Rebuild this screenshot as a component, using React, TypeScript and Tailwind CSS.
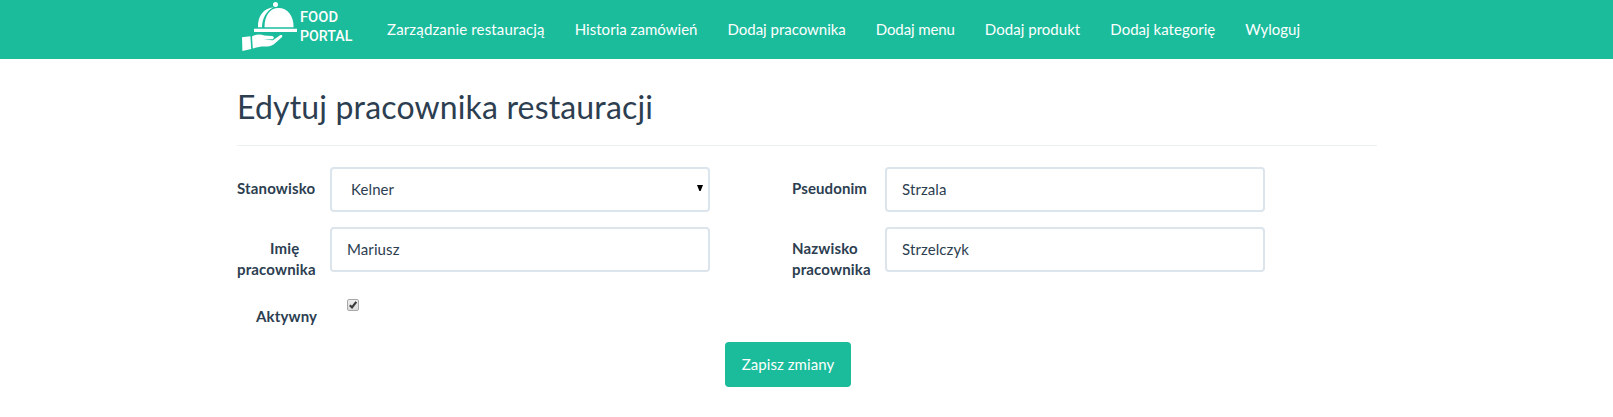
import React from "react";

const links = [
  { label: "Zarządzanie restauracją", tracking: "tracking-[0.15px]" },
  { label: "Historia zamówień", tracking: "tracking-[0.03px]" },
  { label: "Dodaj pracownika", tracking: "tracking-[-0.02px]" },
  { label: "Dodaj menu", tracking: "tracking-[-0.1px]" },
  { label: "Dodaj produkt", tracking: "tracking-[0.04px]" },
  { label: "Dodaj kategorię", tracking: "tracking-[0.03px]" },
  { label: "Wyloguj", tracking: "tracking-normal" },
];

const fieldClass =
  "h-[45px] w-[380px] shrink-0 rounded-[4px] border-2 border-[#dce4ec] bg-white px-[15px] pt-[9px] pb-[11px] leading-[21px] tracking-[0.1px] text-[#2c3e50] outline-none";

function Logo() {
  return (
    <svg width="140" height="59" viewBox="0 0 140 59" className="block shrink-0" fill="#fff">
      <circle cx="45.5" cy="4.6" r="2.5" />
      <path d="M34.5 27.2C34.5 15.5 40 8 48.5 8C57.5 8 63.6 15.5 63.6 27.2Z" />
      <path d="M28 27.2C27.6 16 33.5 8.2 43.5 7.2C36.5 11 32.3 17.5 32 27.2Z" />
      <path d="M24 28.8H67V32H24Z" />
      <path d="M12 37.3L20.4 36.3L21.2 49L12.4 51Z" />
      <path d="M22 36.4C26 34 30.5 33.8 34.5 35.6L42 36C44.5 36.4 44.3 39 42 39.2L33.5 39.8L43 40.2L50 35.3C52 34.2 53.2 36 51.6 37.4L43.6 44.4C40.5 46.4 36 46.7 31.5 46.4L22.8 48.4Z" />
      <g fontFamily="Roboto, sans-serif" fontWeight="500" fontSize="14.6">
        <text x="70" y="21.9" textLength="38" lengthAdjust="spacingAndGlyphs">FOOD</text>
        <text x="70" y="40.9" textLength="52.3" lengthAdjust="spacingAndGlyphs">PORTAL</text>
      </g>
    </svg>
  );
}

export default function App() {
  return (
    <div className="min-h-[417px] bg-white font-['Lato',sans-serif] text-[15px] leading-[21px] text-[#2c3e50]">
      <nav className="flex h-[59px] bg-[#1abc9c] pl-[230px]">
        <Logo />
        <ul className="flex gap-[30px] pt-[19px] pl-[17px] text-white">
          {links.map(({ label, tracking }) => (
            <li key={label}>
              <a href="#" className={`whitespace-nowrap ${tracking}`}>{label}</a>
            </li>
          ))}
        </ul>
      </nav>

      <main className="ml-[237px] w-[1140px]">
        <h2 className="h-[86px] pt-[30px] text-[32px] leading-[35px] tracking-[0.16px]">Edytuj pracownika restauracji</h2>
        <hr className="border-t border-[#ecf0f1]" />

        <form onSubmit={(e) => e.preventDefault()}>
          <div className="mt-[21px] flex gap-[82px]">
            <div className="flex w-[473px] flex-col gap-[15px]">
              <div className="flex h-[45px] items-start justify-between">
                <label htmlFor="role" className="pt-[11px] font-bold tracking-[0.15px]">Stanowisko</label>
                <div className={`${fieldClass} grid`}>
                  <select
                    id="role"
                    defaultValue="Kelner"
                    className="col-start-1 row-start-1 h-[21px] appearance-none pt-px pl-[4px] leading-[21px] outline-none"
                  >
                    <option>Kelner</option>
                  </select>
                  <svg
                    width="6"
                    height="6"
                    viewBox="0 0 6 6"
                    className="pointer-events-none col-start-1 row-start-1 mt-[7px] -mr-[10px] justify-self-end"
                  >
                    <path d="M0 0H6L3.6 6H2.4Z" fill="#000" />
                  </svg>
                </div>
              </div>
              <div className="flex h-[45px] items-start justify-between">
                <label htmlFor="first" className="w-[80px] pt-[11px] font-bold tracking-[0.15px]">
                  <span className="block pl-[33px]">Imię</span>
                  <span className="block">pracownika</span>
                </label>
                <input id="first" defaultValue="Mariusz" className={fieldClass} />
              </div>
              <div className="flex h-[40px] items-start">
                <label htmlFor="active" className="w-[110px] pt-[19px] pl-[19px] font-bold tracking-[0.15px]">Aktywny</label>
                <span className="mt-[12px] grid size-[12px]">
                  <input
                    id="active"
                    type="checkbox"
                    defaultChecked
                    className="col-start-1 row-start-1 size-[12px] appearance-none rounded-[2px] border border-[#a8a8a8] bg-linear-to-b from-[#ededed] to-[#dcdcdc]"
                  />
                  <svg viewBox="0 0 12 12" className="pointer-events-none col-start-1 row-start-1 size-[12px]">
                    <path d="M2.8 6.3L5 8.4L9.3 2.8" fill="none" stroke="#3b3b3b" strokeWidth="2.2" />
                  </svg>
                </span>
              </div>
            </div>

            <div className="flex w-[473px] flex-col gap-[15px]">
              <div className="flex h-[45px] items-start justify-between">
                <label htmlFor="nick" className="pt-[11px] font-bold tracking-[0.1px]">Pseudonim</label>
                <input id="nick" defaultValue="Strzala" className={fieldClass} />
              </div>
              <div className="flex h-[45px] items-start justify-between">
                <label htmlFor="last" className="w-[82px] pt-[11px] font-bold tracking-[0.15px]">Nazwisko pracownika</label>
                <input id="last" defaultValue="Strzelczyk" className={fieldClass} />
              </div>
            </div>
          </div>

          <button
            type="submit"
            className="mt-[15px] ml-[488px] block h-[45px] w-[126px] rounded-[4px] bg-[#1abc9c] text-center leading-[21px] tracking-[0.06px] text-white"
          >
            Zapisz zmiany
          </button>
        </form>
      </main>
    </div>
  );
}
